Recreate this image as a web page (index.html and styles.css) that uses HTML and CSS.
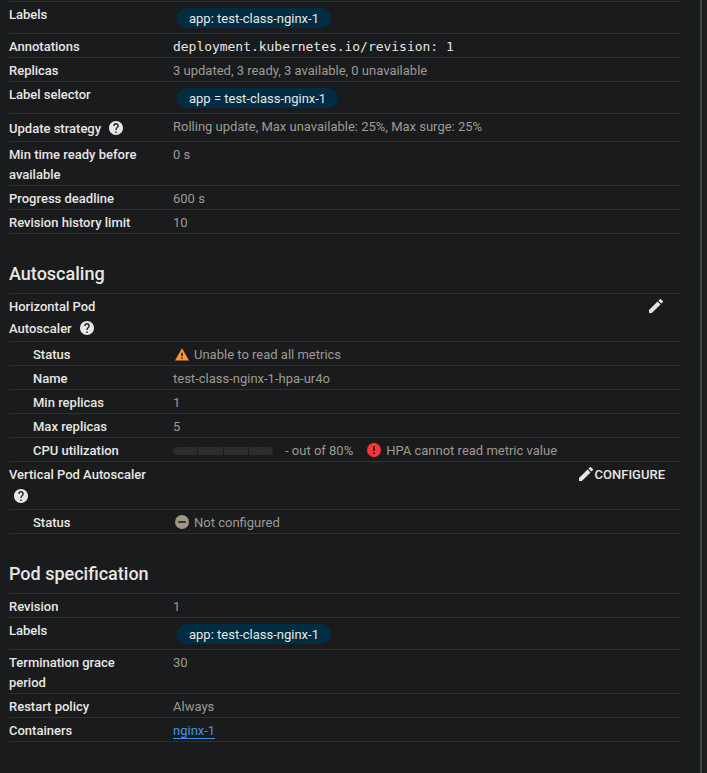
FILE: index.html
```
<!DOCTYPE html>
<html lang="en">
<head>
<meta charset="utf-8">
<title>Deployment details</title>
<link rel="stylesheet" href="styles.css">
</head>
<body>
<svg class="defs" aria-hidden="true">
  <symbol id="help" viewBox="2 2 20 20"><path d="M12 2C6.48 2 2 6.48 2 12s4.48 10 10 10 10-4.48 10-10S17.52 2 12 2zm1 17h-2v-2h2v2zm2.07-7.75l-.9.92C13.45 12.9 13 13.5 13 15h-2v-.5c0-1.1.45-2.1 1.17-2.83l1.24-1.26c.37-.36.59-.86.59-1.41 0-1.1-.9-2-2-2s-2 .9-2 2H8c0-2.210 1.790-4 4-4s4 1.790 4 4c0 .88-.36 1.680-.93 2.250z"/></symbol>
  <symbol id="edit" viewBox="3 3 18 18"><path d="M3 17.250V21h3.750L17.810 9.940l-3.750-3.750L3 17.250zM20.710 7.040a1 1 0 0 0 0-1.410l-2.340-2.340a1 1 0 0 0-1.410 0l-1.830 1.830 3.750 3.750 1.830-1.830z"/></symbol>
</svg>
<div class="layout">
  <main class="content">
    <dl class="props">
      <div class="row chip-row"><dt>Labels</dt><dd><span class="chip">app: test-class-nginx-1</span></dd></div>
      <div class="row"><dt>Annotations</dt><dd class="mono">deployment.kubernetes.io/revision: 1</dd></div>
      <div class="row"><dt>Replicas</dt><dd>3 updated, 3 ready, 3 available, 0 unavailable</dd></div>
      <div class="row chip-row"><dt>Label selector</dt><dd><span class="chip">app = test-class-nginx-1</span></dd></div>
      <div class="row help-row"><dt><span class="line">Update strategy<svg class="help"><use href="#help"/></svg></span></dt><dd>Rolling update, Max unavailable: 25%, Max surge: 25%</dd></div>
      <div class="row"><dt>Min time ready before available</dt><dd>0 s</dd></div>
      <div class="row"><dt>Progress deadline</dt><dd>600 s</dd></div>
      <div class="row"><dt>Revision history limit</dt><dd>10</dd></div>
    </dl>
    <h2>Autoscaling</h2>
    <dl class="props">
      <div class="row group"><dt>Horizontal Pod <span class="line">Autoscaler<svg class="help"><use href="#help"/></svg></span></dt><dd class="action"><svg class="edit"><use href="#edit"/></svg></dd></div>
      <div class="row sub"><dt>Status</dt><dd class="state"><svg class="warn" viewBox="0 0 14 13"><path fill="#ff9432" d="M7 .3 14 12.400H0z"/><path stroke="#1a1b1d" stroke-width="1.500" d="M7 4.800v3.400M7 9.400v1.400"/></svg>Unable to read all metrics</dd></div>
      <div class="row sub"><dt>Name</dt><dd>test-class-nginx-1-hpa-ur4o</dd></div>
      <div class="row sub"><dt>Min replicas</dt><dd>1</dd></div>
      <div class="row sub"><dt>Max replicas</dt><dd>5</dd></div>
      <div class="row sub"><dt>CPU utilization</dt><dd class="state cpu"><span class="meter"><i></i><i></i><i></i><i></i></span><span class="usage">- out of 80%</span><svg class="dot" viewBox="0 0 14 14"><circle cx="7" cy="7" r="7" fill="#ff3535"/><path stroke="#1a1b1d" stroke-width="1.700" d="M7 3v5M7 9.300V11"/></svg>HPA cannot read metric value</dd></div>
      <div class="row group"><dt>Vertical Pod Autoscaler <span class="line"><svg class="help alone"><use href="#help"/></svg></span></dt><dd class="action"><svg class="edit"><use href="#edit"/></svg>CONFIGURE</dd></div>
      <div class="row sub"><dt>Status</dt><dd class="state"><svg class="dot" viewBox="0 0 14 14"><circle cx="7" cy="7" r="7" fill="#a09688"/><path stroke="#1a1b1d" stroke-width="1.600" d="M3.200 7h7.600"/></svg>Not configured</dd></div>
    </dl>
    <h2>Pod specification</h2>
    <dl class="props">
      <div class="row"><dt>Revision</dt><dd>1</dd></div>
      <div class="row chip-row"><dt>Labels</dt><dd><span class="chip">app: test-class-nginx-1</span></dd></div>
      <div class="row"><dt>Termination grace period</dt><dd>30</dd></div>
      <div class="row"><dt>Restart policy</dt><dd>Always</dd></div>
      <div class="row"><dt>Containers</dt><dd><a class="link">nginx-1</a></dd></div>
    </dl>
  </main>
  <div class="gutter"></div>
</div>
</body>
</html>
```
FILE: styles.css
```
* { box-sizing: border-box; }
body {
  margin: 0;
  height: 773px;
  overflow: hidden;
  background: #1a1b1d;
  color: #9e9a94;
  font: 400 13px/20px Roboto, "Liberation Sans", sans-serif;
}
.defs { display: none; }
svg { fill: #e8e6e3; flex: none; }
.layout { display: flex; height: 773px; }
.content { width: 672px; margin-left: 9px; padding-top: 1px; }
.gutter {
  width: 7px;
  margin-left: auto;
  border-left: 2px solid #414a4a;
  background: linear-gradient(90deg, #1a1b1d 3px, #25282a 3px, #25282a 4px, #1a1b1d 4px);
}
.props { margin: 0; border-top: 1px solid #2d2f31; }
.row {
  display: grid;
  grid-template-columns: 140px 1fr;
  column-gap: 24px;
  padding-top: 3px;
  border-bottom: 1px solid #2d2f31;
}
dt { color: #e8e6e3; font-weight: 500; }
dd { margin: 0; }
.chip-row { height: 32px; }
.chip {
  display: block;
  width: max-content;
  height: 20px;
  margin: 3px 0 0 4px;
  padding: 1px 12px 0;
  border-radius: 10px;
  background: #002d43;
  color: #e8e6e3;
}
.mono { color: #e8e6e3; font-family: "DejaVu Sans Mono", monospace; letter-spacing: -0.03px; }
.line { display: flex; align-items: center; height: 24px; }
.help { width: 14px; height: 14px; margin: 0 0 2px 8px; }
.alone { margin-left: 5px; }
.help-row { height: 28px; }
.group { height: 48px; }
.sub dt { padding-left: 24px; }
.state { display: flex; align-items: center; }
.warn, .dot { width: 14px; height: 14px; margin: 0 5px 2px 2px; }
.warn { height: 13px; }
.meter { display: flex; gap: 1px; width: 100px; height: 8px; border-radius: 4px; overflow: hidden; }
.meter i { flex: 1; background: #2a2c2e; }
.usage { margin: 0 12px; }
.action {
  display: flex;
  justify-content: flex-end;
  align-items: center;
  height: 20px;
  padding-right: 16px;
  color: #e8e6e3;
  font-weight: 500;
}
.edit { width: 14px; height: 14px; margin: 0 2px 2px 0; }
h2 {
  margin: 28px 0 7px;
  color: #e8e6e3;
  font-size: 18px;
  font-weight: 500;
  line-height: 24px;
}
.link { color: #4793e0; border-bottom: 1px solid #4793e0; }
```
